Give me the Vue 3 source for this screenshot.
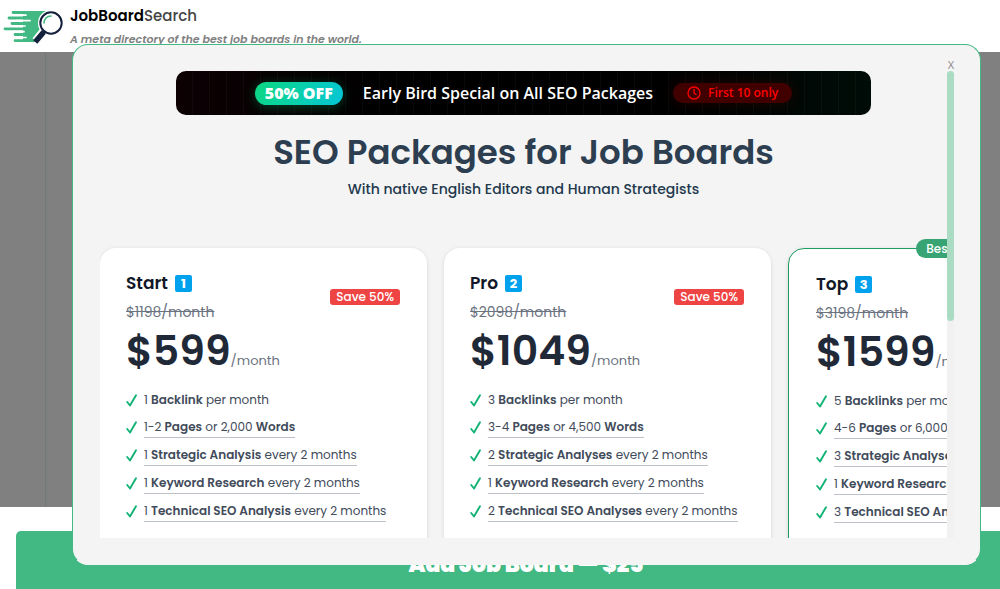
<template>
  <div class="page">
    <header class="header">
      <svg class="logo" viewBox="0 0 62 36" aria-hidden="true">
        <path d="M21 2H47L39 33H21Z" fill="#42b883" />
        <g stroke="#42b883" stroke-width="2.800" stroke-linecap="round">
          <path d="M11 3.500H26M7 9H26M10 14.500H26M3 19.800H26M13 25.500H26M13 31.600H26" />
        </g>
        <g stroke="#fff" stroke-width="1.700" stroke-linecap="round">
          <path d="M17 6.200H24M14 11.700H28M19 17H23M10 22.700H22M20 28.500H24" />
        </g>
        <path d="M42 22L34 32" stroke="#fff" stroke-width="9" />
        <circle cx="49" cy="14" r="13" fill="#fff" />
        <circle cx="49" cy="14" r="10.700" fill="#fff" stroke="#14213d" stroke-width="2" />
        <path d="M42.500 22L40.500 25" stroke="#14213d" stroke-width="3" />
        <path d="M40 25L35 31" stroke="#14213d" stroke-width="5.500" stroke-linecap="square" />
        <path d="M42 14C42 10 45 7 49 7" fill="none" stroke="#42b883" stroke-width="1.600" stroke-linecap="round" />
      </svg>
      <div>
        <a class="brand" href="#">JobBoard<span>Search</span></a>
        <p class="tagline">A meta directory of the best job boards in the world.</p>
      </div>
    </header>

    <main class="backdrop"></main>
    <button class="add-board" type="button">Add Job Board — $25</button>

    <section class="modal" role="dialog" aria-labelledby="modal-title">
      <button class="close" type="button" aria-label="Close">X</button>
      <div class="scroll-area">
        <div class="banner">
          <span class="discount">50% OFF</span>
          <span class="offer">Early Bird Special on All SEO Packages</span>
          <span class="limit">
            <svg viewBox="0 0 14 14" fill="none" stroke="#f00" stroke-width="1.3" stroke-linecap="round" aria-hidden="true">
              <circle cx="7" cy="7" r="6" />
              <path d="M7 3.500V7L9 8.500" />
            </svg>
            First 10 only
          </span>
        </div>
        <h1 id="modal-title" class="title">SEO Packages for Job Boards</h1>
        <p class="subtitle">With native English Editors and Human Strategists</p>

        <div class="plans">
          <article v-for="plan in plans" :key="plan.name" class="plan" :class="{ best: plan.best }">
            <span v-if="plan.best" class="ribbon">Best Value</span>
            <div class="plan-head">
              <div>
                <h2 class="plan-name">{{ plan.name }} <span class="keycap">{{ plan.level }}</span></h2>
                <p class="old-price"><s>${{ plan.oldPrice }}/month</s></p>
              </div>
              <span class="save">Save 50%</span>
            </div>
            <p class="price"><strong>${{ plan.price }}</strong>/month</p>
            <ul class="features">
              <li v-for="(feature, i) in plan.features" :key="i">
                <svg class="check" viewBox="0 0 11 13" fill="none" stroke="#10b374" stroke-width="1.9" stroke-linecap="round" stroke-linejoin="round" aria-hidden="true">
                  <path d="M1.200 8L4 11.500L10 1.200" />
                </svg>
                <span :class="{ hint: i > 0 }">
                  <template v-for="(part, j) in feature" :key="j">
                    <b v-if="j % 2">{{ part }}</b>
                    <template v-else>{{ part }}</template>
                  </template>
                </span>
              </li>
            </ul>
          </article>
        </div>
      </div>
      <div class="scrollbar"><div class="thumb"></div></div>
    </section>
  </div>
</template>

<script setup>
// odd parts of a feature are printed in bold
const plans = [
  {
    name: 'Start',
    level: 1,
    oldPrice: 1198,
    price: 599,
    features: [
      ['1 ', 'Backlink', ' per month'],
      ['1-2 ', 'Pages', ' or 2,000 ', 'Words'],
      ['1 ', 'Strategic Analysis', ' every 2 months'],
      ['1 ', 'Keyword Research', ' every 2 months'],
      ['1 ', 'Technical SEO Analysis', ' every 2 months']
    ]
  },
  {
    name: 'Pro',
    level: 2,
    oldPrice: 2098,
    price: 1049,
    features: [
      ['3 ', 'Backlinks', ' per month'],
      ['3-4 ', 'Pages', ' or 4,500 ', 'Words'],
      ['2 ', 'Strategic Analyses', ' every 2 months'],
      ['1 ', 'Keyword Research', ' every 2 months'],
      ['2 ', 'Technical SEO Analyses', ' every 2 months']
    ]
  },
  {
    name: 'Top',
    level: 3,
    oldPrice: 3198,
    price: 1599,
    best: true,
    features: [
      ['5 ', 'Backlinks', ' per month'],
      ['4-6 ', 'Pages', ' or 6,000 ', 'Words'],
      ['3 ', 'Strategic Analyses', ' every 2 months'],
      ['1 ', 'Keyword Research', ' every 2 months'],
      ['3 ', 'Technical SEO Analyses', ' every 2 months']
    ]
  }
]
</script>

<style>
body {
  margin: 0;
  background: #fff;
}
</style>

<style scoped>
.page {
  position: relative;
  display: flex;
  flex-direction: column;
  height: 100vh;
  overflow: hidden;
  font-family: Poppins, Inter, "Liberation Sans", sans-serif;
  color: #414b5a;
}
.page * {
  box-sizing: border-box;
}
h1, h2, p, ul {
  margin: 0;
  padding: 0;
}
button {
  border: 0;
  font-family: inherit;
  cursor: pointer;
}
.header {
  flex: none;
  display: flex;
  gap: 6px;
  height: 52px;
  padding-left: 2px;
}
.logo {
  width: 62px;
  height: 36px;
  margin-top: 9px;
}
.brand {
  display: block;
  margin-top: 4px;
  font-size: 15px;
  line-height: 24px;
  font-weight: 600;
  color: #000;
  text-decoration: none;
}
.brand span {
  font-weight: 500;
  color: #444;
}
.tagline {
  font-size: 11px;
  line-height: 22px;
  font-weight: 600;
  font-style: italic;
  color: #808080;
}
.backdrop {
  flex: 1;
  margin-bottom: 24px;
  background: linear-gradient(#6f7c76, #6f7c76) 45px 0 / 1px 100% no-repeat #808080;
}
.add-board {
  flex: none;
  height: 66px;
  margin: 0 -36px -8px 16px;
  border-radius: 5px;
  background: #42b883;
  color: #fff;
  font-size: 22px;
  font-weight: 900;
}
.modal {
  position: absolute;
  inset: 44px 19px 24px 72px;
  padding: 26px 26px 26px 27px;
  border: 1px solid #42b883;
  border-bottom-color: #f4f4f4;
  border-radius: 16px;
  background: #f4f4f4;
  display: flex;
}
.close {
  position: absolute;
  top: 12px;
  right: 22px;
  padding: 0;
  width: 14px;
  height: 16px;
  background: none;
  font-family: "Open Sans", "Noto Sans", sans-serif;
  font-size: 11px;
  line-height: 16px;
  color: #888;
}
.scroll-area {
  flex: 1;
  min-width: 0;
  overflow: hidden;
}
.scrollbar {
  flex: none;
  width: 7px;
  background: #f1f1f1;
}
.thumb {
  height: 250px;
  border-radius: 4px;
  background: #a9dcc3;
}
.banner {
  display: flex;
  align-items: center;
  justify-content: center;
  gap: 20px;
  width: 82%;
  height: 44px;
  margin: 0 auto;
  border-radius: 10px;
  background:
    repeating-linear-gradient(90deg, transparent 0 16px, rgba(255, 255, 255, 0.03) 16px 17px),
    linear-gradient(90deg, #0c0003, #000 30%, #000 70%, #000c07);
  font-family: "Segoe UI", "Open Sans", "Noto Sans", sans-serif;
  white-space: nowrap;
}
.discount {
  padding: 0 10px;
  border-radius: 12px;
  background: linear-gradient(120deg, #0cd880, #05c6d8);
  box-shadow: 0 2px 12px rgba(12, 216, 128, 0.3);
  color: #fff;
  font-size: 16px;
  line-height: 23px;
  font-weight: 800;
}
.offer {
  color: #fff;
  font-size: 16px;
  font-weight: 600;
}
.limit {
  display: flex;
  align-items: center;
  gap: 7px;
  padding: 0 14px;
  border-radius: 10px;
  background: #400000;
  box-shadow: 0 0 14px rgba(255, 0, 0, 0.12);
  color: #f00;
  font-size: 12px;
  line-height: 20px;
  font-weight: 600;
}
.limit svg {
  width: 14px;
  height: 14px;
}
.title {
  margin-top: 13px;
  font-size: 34px;
  line-height: 48px;
  font-weight: 600;
  text-align: center;
  color: #2c3e50;
}
.subtitle {
  font-size: 14px;
  line-height: 26px;
  font-weight: 500;
  text-align: center;
  color: #22384d;
}
.plans {
  display: flex;
  gap: 17px;
  margin-top: 46px;
}
.plan {
  position: relative;
  flex: 0 0 327px;
  height: 420px;
  padding: 23px 27px 0 26px;
  border-radius: 16px;
  background: #fff;
  box-shadow: 0 1px 4px rgba(0, 0, 0, 0.12);
}
.plan.best {
  padding-left: 27px;
  border: 1px solid #1f9d60;
}
.ribbon {
  position: absolute;
  top: -10px;
  right: 114px;
  padding: 0 10px;
  border-radius: 10px;
  background: #38a373;
  color: #fff;
  font-size: 12px;
  line-height: 19px;
  font-weight: 500;
}
.plan-head {
  display: flex;
  align-items: center;
  justify-content: space-between;
}
.plan-name {
  display: flex;
  align-items: center;
  gap: 7px;
  font-size: 17px;
  line-height: 24px;
  font-weight: 600;
  color: #111827;
}
.keycap {
  width: 17px;
  border-radius: 2px;
  background: #00a2ed;
  color: #fff;
  font-size: 13px;
  line-height: 17px;
  font-weight: 700;
  text-align: center;
}
.old-price {
  margin-top: 7px;
  font-size: 14px;
  line-height: 20px;
  color: #6b7280;
}
.save {
  padding: 0 6px;
  border-radius: 3px;
  background: #ef4444;
  color: #fff;
  font-size: 12px;
  line-height: 16px;
  font-weight: 500;
}
.price {
  margin-top: 3px;
  font-size: 13px;
  line-height: 52px;
  color: #6b7280;
}
.price strong {
  font-size: 41px;
  font-weight: 600;
  color: #1f2937;
}
.features {
  display: grid;
  gap: 7px;
  margin-top: 3px;
  list-style: none;
  font-size: 12px;
  line-height: 20px;
  white-space: nowrap;
}
.features li {
  display: flex;
  align-items: flex-start;
  gap: 7px;
}
.features b {
  font-weight: 600;
}
.hint {
  height: 21px;
  border-bottom: 1px solid #bcc1ca;
}
.check {
  width: 11px;
  height: 13px;
  margin-top: 4px;
}
</style>
